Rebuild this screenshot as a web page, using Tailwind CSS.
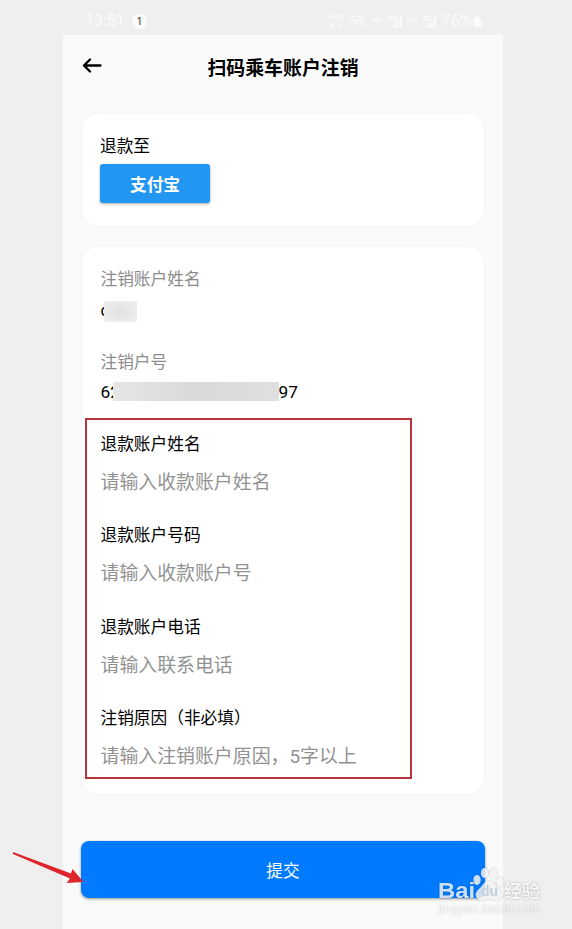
<!DOCTYPE html>
<html lang="zh-CN">
<head>
<meta charset="utf-8">
<title>扫码乘车账户注销</title>
<script src="https://cdn.jsdelivr.net/npm/@tailwindcss/browser@4"></script>
</head>
<body class="relative h-[929px] w-[572px] overflow-hidden bg-[#efefef] font-['Roboto','Noto_Sans_CJK_SC',sans-serif] text-black">
<div class="ml-[63px] flex h-full w-[440px] flex-col">
  <!-- status bar -->
  <header class="flex h-[35px] shrink-0 items-center pt-[7px] pr-[21px] pl-[22px] text-[#fbfbfb]">
    <span class="w-[40px] text-[16px] leading-5 whitespace-nowrap">13:51</span>
    <span class="ml-[7px] flex size-[15px] items-center justify-center rounded-full bg-[#fcfcfc] text-[10px] text-[#333]">1</span>
    <div class="ml-auto flex items-center">
      <div class="mr-[5px] flex flex-col items-center gap-px text-[8px] leading-[8px] font-medium"><span>9.05</span><span>K/s</span></div>
      <svg class="mr-[6px] h-[14px] w-[17px]" viewBox="0 0 17 14" fill="none" stroke="currentColor" stroke-width="1.500"><path d="M1 5C5 1 11 1 14.500 5M3.500 7.500C6 5 10 5 12.500 7.500M5.800 9.800C7 8.700 8.500 8.700 9.800 9.800"/><path d="M7.800 11v2M12 11l2-2 2 2"/></svg>
      <span class="mr-[5px] text-[8px] font-bold">HD</span>
      <svg class="mr-[4px] h-[13px] w-[15px]" viewBox="0 0 15 13" fill="currentColor"><text x="0" y="6" font-size="7" font-weight="700">4G</text><path d="M3 11h2v2H3zM6 8h2v5H6zM9 5h2v8H9zM12 1h2v12h-2z"/></svg>
      <span class="mr-[5px] text-[8px] font-bold">HD</span>
      <svg class="mr-[4px] h-[13px] w-[15px]" viewBox="0 0 15 13" fill="currentColor"><text x="0" y="6" font-size="7" font-weight="700">4G</text><path d="M3 11h2v2H3zM6 8h2v5H6zM9 5h2v8H9zM12 1h2v12h-2z"/></svg>
      <span class="text-[16.500px] leading-5">76%</span>
      <svg class="ml-[1px] h-[12px] w-[9px]" viewBox="0 0 9 13" fill="currentColor"><path d="M0 4h2V2h5v2h2v9H0z"/></svg>
    </div>
  </header>

  <main class="flex min-h-0 flex-1 flex-col bg-[#fafafa] px-[18px]">
    <nav class="grid h-[78px] shrink-0 grid-cols-[60px_1fr_60px] items-start pt-[20px]">
      <svg class="mt-[3px] ml-[1px] h-[15px] w-[20px]" viewBox="0 0 20 15" fill="none" stroke="#000" stroke-width="2.300" stroke-linecap="round" stroke-linejoin="round"><path d="M18.500 7.500H2M8 1.500L2 7.500l6 6"/></svg>
      <h1 class="text-center text-[18.900px] leading-7 font-bold whitespace-nowrap">扫码乘车账户注销</h1>
    </nav>

    <section class="h-[114px] shrink-0 rounded-[17px] border border-[#f3f5f7] bg-white px-[18px] pt-[21px]">
      <p class="text-[16.700px] leading-6">退款至</p>
      <button class="mt-[5px] block h-[39px] w-[110px] rounded-[3px] bg-[#2296f3] pt-[4px] text-[16.700px] font-bold text-white shadow-[0_1px_3px_rgba(0,0,0,0.35)]">支付宝</button>
    </section>

    <section class="mt-[19px] h-[549px] shrink-0 rounded-[17px] border border-[#f3f5f7] bg-white pt-[21px] pl-[3px]">
      <div class="pl-[15.500px]">
        <p class="text-[16.700px] leading-6 text-[#8c8c8c]">注销账户姓名</p>
        <div class="mt-[7px] flex h-6 items-center text-[16.700px]">
          <span>c</span><span class="relative -ml-[5px] h-[21px] w-[33px] bg-radial from-[#e1e1e1] to-[#f0f0f0]"></span>
        </div>
        <p class="mt-[28px] text-[16.700px] leading-6 text-[#8c8c8c]">注销户号</p>
        <div class="mt-[4px] flex h-6 items-center text-[17.300px]">
          <span class="pt-[3px]">62</span><span class="relative -ml-[6.500px] h-[19px] w-[166px] bg-linear-to-r from-[#e6e6e6] via-[#d9d9d9] to-[#dfdfdf]"></span><span class="-ml-px pt-[3px]">97</span>
        </div>
      </div>

      <form class="mt-[15px] flex h-[361px] w-[327px] flex-col gap-[29.300px] border-2 border-[#b9353c] pt-[13px] pl-[13.500px]">
        <label class="flex h-[62px] flex-col justify-between">
          <span class="text-[16.700px] leading-6">退款账户姓名</span>
          <span class="text-[18.900px] leading-6 text-[#929292]">请输入收款账户姓名</span>
        </label>
        <label class="flex h-[62px] flex-col justify-between">
          <span class="text-[16.700px] leading-6">退款账户号码</span>
          <span class="text-[18.900px] leading-6 text-[#929292]">请输入收款账户号</span>
        </label>
        <label class="flex h-[62px] flex-col justify-between">
          <span class="text-[16.700px] leading-6">退款账户电话</span>
          <span class="text-[18.900px] leading-6 text-[#929292]">请输入联系电话</span>
        </label>
        <label class="flex h-[62px] flex-col justify-between">
          <span class="text-[16.700px] leading-6">注销原因（非必填）</span>
          <span class="text-[18.900px] leading-6 text-[#929292]">请输入注销账户原因，5字以上</span>
        </label>
      </form>
    </section>

    <button class="mt-[46px] h-[57px] shrink-0 rounded-[8px] bg-[#007bff] pt-[4px] text-[16.700px] text-white shadow-[0_1px_3px_rgba(0,0,0,0.4)]">提交</button>
  </main>
</div>

<!-- pointer to the submit button -->
<svg class="absolute top-[845px] left-[10px] h-[45px] w-[80px]" viewBox="10 845 80 45" fill="#e0242b"><path d="M13 852L71 873.500l1.500-4.500L83.500 882 66.500 883l3.500-4.500L13 854z"/></svg>

<!-- watermark -->
<div class="absolute top-[865px] left-[436px] h-[56px] w-[112px] text-white/80">
  <svg class="h-[56px] w-[112px] [filter:drop-shadow(0_0_1px_rgba(0,0,0,0.3))]" viewBox="0 0 112 56" fill="currentColor">
    <text x="2" y="33" font-size="22.500" font-weight="700" font-family="Liberation Sans" textLength="37" lengthAdjust="spacingAndGlyphs">Bai</text>
    <ellipse cx="41" cy="15" rx="3.700" ry="5"/>
    <ellipse cx="48.500" cy="8" rx="3.600" ry="5"/>
    <ellipse cx="57.500" cy="8.500" rx="3.700" ry="5"/>
    <ellipse cx="64" cy="17" rx="3.500" ry="5"/>
    <path d="M53 16c5 0 6 5 9 8 5 4 5 8 2 10-3 3-7 0-11 0s-8 3-11 0c-4-3-3-7 2-11 3-3 4-7 9-7z"/>
    <text x="45" y="31" font-size="14" font-weight="700" fill="#c3d0dc" font-family="Liberation Sans">du</text>
    <text x="68" y="33" font-size="18" font-weight="700" textLength="36">经验</text>
    <text x="2" y="48" font-size="12" fill-opacity="0.7" textLength="102" font-family="Liberation Sans">jingyan.baidu.com</text>
  </svg>
</div>
</body>
</html>
